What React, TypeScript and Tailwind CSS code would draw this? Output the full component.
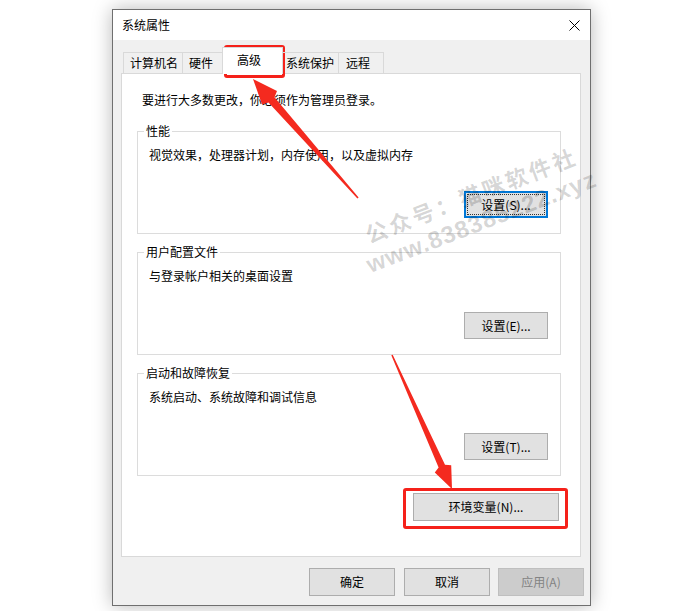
import React from 'react';

type Pt = [number, number];

// tapered annotation arrow, tip -> tail
const arrowPoints = (tip: Pt, tail: Pt, headLen: number, headHalf: number, neck: number, tailHalf: number) => {
  const dx = tail[0] - tip[0];
  const dy = tail[1] - tip[1];
  const len = Math.hypot(dx, dy);
  const ux = dx / len;
  const uy = dy / len;
  const nx = -uy;
  const ny = ux;
  const bx = tip[0] + ux * headLen;
  const by = tip[1] + uy * headLen;
  const pts: Pt[] = [
    tip,
    [bx + nx * headHalf, by + ny * headHalf],
    [bx + ux * 3 + nx * neck, by + uy * 3 + ny * neck],
    [tail[0] + nx * tailHalf, tail[1] + ny * tailHalf],
    [tail[0] - nx * tailHalf, tail[1] - ny * tailHalf],
    [bx + ux * 3 - nx * neck, by + uy * 3 - ny * neck],
    [bx - nx * headHalf, by - ny * headHalf],
  ];
  return pts.map((p) => `${p[0].toFixed(1)},${p[1].toFixed(1)}`).join(' ');
};

const Button: React.FC<{ label: string; className?: string; focused?: boolean; disabled?: boolean }> = ({
  label,
  className = '',
  focused,
  disabled,
}) => (
  <button
    className={
      'relative flex items-center justify-center text-[12px] leading-none ' +
      (disabled
        ? 'bg-[#cccccc] border border-[#bfbfbf] text-[#838383] '
        : focused
        ? 'bg-[#e1e1e1] border-2 border-[#0078d7] text-black '
        : 'bg-[#e1e1e1] border border-[#adadad] text-black ') +
      className
    }
  >
    {focused && <span className="absolute inset-[1px] border border-dotted border-[#333]" />}
    <span className="relative">{label}</span>
  </button>
);

const Group: React.FC<{ title: string; desc: string; btn: string; focused?: boolean; className?: string }> = ({
  title,
  desc,
  btn,
  focused,
  className = '',
}) => (
  <div className={'relative h-[103px] border border-[#dcdcdc] flex flex-col ' + className}>
    <span className="absolute -top-[9px] left-[6px] bg-white px-[2px] text-[12px] leading-[16px]">{title}</span>
    <p className="pl-[11px] pt-[15px] text-[12px] leading-[16px]">{desc}</p>
    <Button label={btn} focused={focused} className="self-end mt-[28px] mr-[12px] w-[84px] h-[27px]" />
  </div>
);

const tabs = [
  { label: '计算机名', w: 'w-[60px] pl-[6px]' },
  { label: '硬件', w: 'w-[41px] pl-[6px] -ml-px' },
  { label: '高级', w: '', active: true },
  { label: '系统保护', w: 'w-[57px] pl-[3px] -ml-px' },
  { label: '远程', w: 'w-[46px] pl-[7px] -ml-px' },
];

const App: React.FC = () => {
  return (
    <div className="relative w-[689px] h-[611px] bg-white overflow-hidden font-['Noto_Sans_CJK_SC','Noto_Sans',sans-serif] text-black">
      <div className="pt-[9px] pl-[112px]">
        <div className="w-[479px] h-[597px] border border-[#6f6f6f] bg-white flex flex-col shadow-[0_0_18px_rgba(0,0,0,0.28)]">
          {/* title bar */}
          <div className="h-[30px] flex items-center justify-between pl-[9px] pr-[9px]">
            <span className="text-[12px] leading-none">系统属性</span>
            <svg width="11" height="11" viewBox="0 0 11 11" className="mr-[1px]">
              <path d="M0.5 0.5 L10.5 10.5 M10.5 0.5 L0.5 10.5" stroke="#000" strokeWidth="1" fill="none" />
            </svg>
          </div>

          <div className="flex-1 bg-[#f0f0f0] pl-[8px] pr-[9px] pt-[7px] flex flex-col">
            {/* tabs */}
            <div className="relative z-10 flex items-end h-[26px] pl-[2px]">
              {tabs.map((t) =>
                t.active ? (
                  <div
                    key={t.label}
                    className="-ml-px w-[61px] h-[27px] -mb-px bg-white border border-b-0 border-[#d9d9d9] pl-[14px] pt-[4px] text-[12px] leading-[16px]"
                  >
                    {t.label}
                  </div>
                ) : (
                  <div
                    key={t.label}
                    className={'h-[21px] flex items-center border border-b-0 border-[#d9d9d9] text-[12px] ' + t.w}
                  >
                    {t.label}
                  </div>
                )
              )}
            </div>

            {/* panel */}
            <div className="h-[484px] bg-white border border-[#d9d9d9] pl-[15px] pr-[19px] pt-[18px] flex flex-col">
              <p className="ml-[5px] text-[12px] leading-[16px]">要进行大多数更改，你必须作为管理员登录。</p>
              <Group className="mt-[23px]" title="性能" desc="视觉效果，处理器计划，内存使用，以及虚拟内存" btn="设置(S)..." focused />
              <Group className="mt-[18px]" title="用户配置文件" desc="与登录帐户相关的桌面设置" btn="设置(E)..." />
              <Group className="mt-[18px]" title="启动和故障恢复" desc="系统启动、系统故障和调试信息" btn="设置(T)..." />
              <Button label="环境变量(N)..." className="self-end mt-[17px] mr-[2px] w-[146px] h-[28px]" />
            </div>

            {/* dialog buttons */}
            <div className="mt-[11px] -mr-[3px] flex justify-end gap-[9px]">
              <Button label="确定" className="w-[86px] h-[28px]" />
              <Button label="取消" className="w-[86px] h-[28px]" />
              <Button label="应用(A)" disabled className="w-[86px] h-[28px] -ml-px" />
            </div>
          </div>
        </div>
      </div>

      {/* watermark */}
      <div className="absolute left-[336px] top-[178px] w-[280px] text-center font-bold text-[22px] leading-[30px] text-[rgba(0,0,0,0.17)] rotate-[-21deg] pointer-events-none">
        <div className="tracking-[3px]">公众号：猫咪软件社</div>
        <div className="tracking-[1px] font-['Liberation_Sans','Noto_Sans_CJK_SC',sans-serif] text-[24px]">www.838385222.xyz</div>
      </div>

      {/* red annotation boxes */}
      <div className="absolute left-[224px] top-[45px] w-[61px] h-[33px] border-[3px] border-[#f5211a] rounded-[3px] pointer-events-none" />
      <div className="absolute left-[403px] top-[488px] w-[165px] h-[41px] border-[3px] border-[#f5211a] rounded-[3px] pointer-events-none" />

      {/* red arrows */}
      <svg className="absolute inset-0 pointer-events-none" width="689" height="611">
        <polygon points={arrowPoints([253, 79], [358, 198], 25, 10, 4, 0.8)} fill="#f42a1f" />
        <polygon points={arrowPoints([452, 489], [392, 355], 22, 9, 3.5, 0.8)} fill="#f42a1f" />
      </svg>
    </div>
  );
};

export default App;
